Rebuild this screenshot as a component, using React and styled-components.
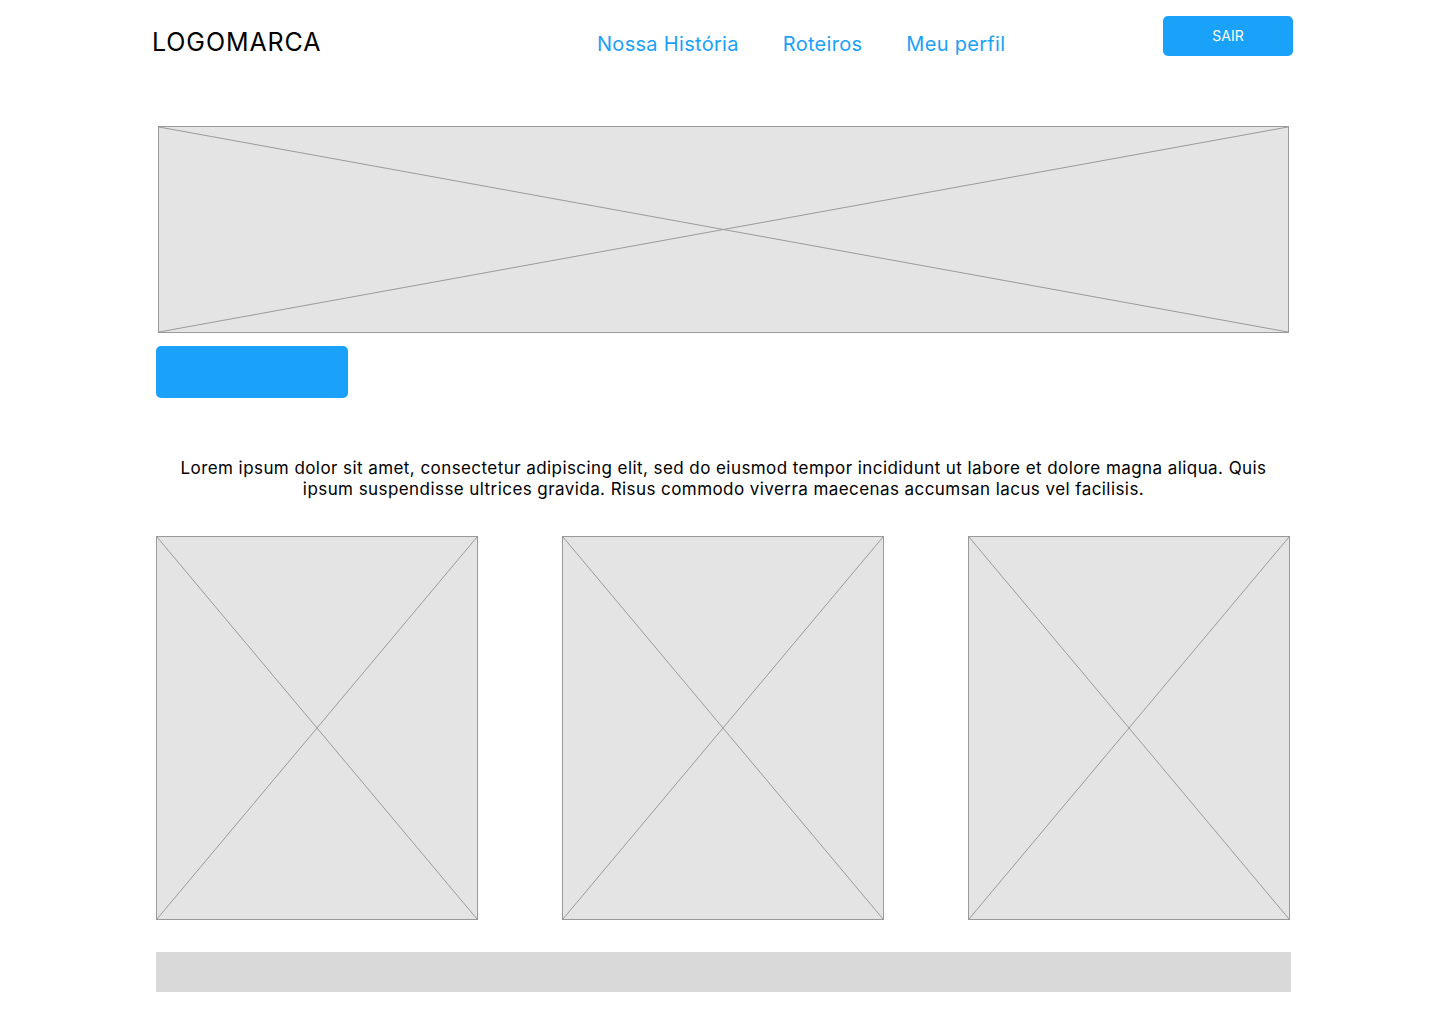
import React from "react"
import styled, { createGlobalStyle } from "styled-components"

const GlobalStyle = createGlobalStyle`
  body {
    margin: 0;
    background: #ffffff;
    font-family: Inter, "Noto Sans", sans-serif;
    color: #000000;
  }
`

function Placeholder({ className }) {
  return (
    <Frame className={className}>
      <svg width="100%" height="100%" preserveAspectRatio="none" viewBox="0 0 100 100">
        <line x1="0" y1="0" x2="100" y2="100" stroke="#9a9a9a" strokeWidth="1" vectorEffect="non-scaling-stroke" />
        <line x1="100" y1="0" x2="0" y2="100" stroke="#9a9a9a" strokeWidth="1" vectorEffect="non-scaling-stroke" />
      </svg>
    </Frame>
  )
}

function App() {
  return (
    <>
      <GlobalStyle />
      <Page>
        <Header>
          <Logo>LOGOMARCA</Logo>
          <Nav>
            <NavLink href="#">Nossa História</NavLink>
            <NavLink href="#">Roteiros</NavLink>
            <NavLink href="#">Meu perfil</NavLink>
          </Nav>
          <ExitButton>SAIR</ExitButton>
        </Header>
        <Main>
          <Hero />
          <CtaButton />
          <Intro>
            Lorem ipsum dolor sit amet, consectetur adipiscing elit, sed do eiusmod tempor incididunt ut labore et dolore magna aliqua. Quis
            <br />
            ipsum suspendisse ultrices gravida. Risus commodo viverra maecenas accumsan lacus vel facilisis.
          </Intro>
          <Cards>
            <Card />
            <Card />
            <Card />
          </Cards>
          <Footer />
        </Main>
      </Page>
    </>
  )
}

export default App

const Page = styled.div`
  width: 1440px;
  min-height: 1024px;
`
const Header = styled.header`
  display: flex;
  align-items: flex-start;
  padding: 16px 0 0 152px;
  width: 1141px;
  height: 70px;
  box-sizing: content-box;
`
const Logo = styled.div`
  font-size: 25px;
  font-weight: 400;
  letter-spacing: 0.9px;
  margin-top: 11px;
  width: 445px;
`
const Nav = styled.nav`
  display: flex;
  gap: 44px;
  margin-top: 16px;
  flex: 1;
`
const NavLink = styled.a`
  font-size: 20px;
  letter-spacing: 0.3px;
  color: #1aa1f9;
  text-decoration: none;
`
const ExitButton = styled.button`
  width: 130px;
  height: 40px;
  border: none;
  border-radius: 5px;
  background: #1aa1f9;
  color: #ffffff;
  font-family: inherit;
  font-size: 14px;
  padding: 0 0 2px;
`
const Main = styled.main`
  width: 1135px;
  margin-left: 156px;
  padding-top: 40px;
  display: flex;
  flex-direction: column;
`
const Frame = styled.div`
  background: #e4e4e4;
  border: 1px solid #9a9a9a;
  box-sizing: border-box;
  svg {
    display: block;
  }
`
const Hero = styled(Placeholder)`
  width: 1131px;
  height: 207px;
  margin-left: 2px;
`
const CtaButton = styled.button`
  width: 192px;
  height: 52px;
  margin-top: 13px;
  border: none;
  border-radius: 5px;
  background: #1aa1f9;
`
const Intro = styled.p`
  margin: 60px 0 0;
  text-align: center;
  font-size: 17px;
  letter-spacing: 0.43px;
  line-height: 21px;
  white-space: nowrap;
`
const Cards = styled.div`
  display: grid;
  grid-template-columns: repeat(3, 322px);
  justify-content: space-between;
  margin-top: 36px;
  width: 1134px;
`
const Card = styled(Placeholder)`
  height: 384px;
`
const Footer = styled.footer`
  height: 40px;
  margin-top: 32px;
  background: #d9d9d9;
`
